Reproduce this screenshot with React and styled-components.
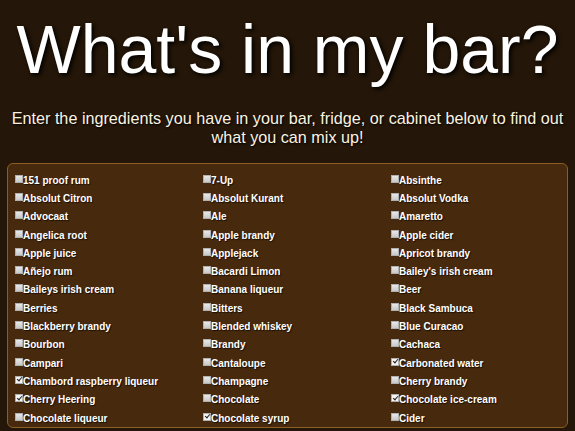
import React from 'react';
import styled, { createGlobalStyle } from 'styled-components';

const GlobalStyle = createGlobalStyle`
  html, body {
    margin: 0;
    padding: 0;
    background: #241608;
    font-family: "Liberation Sans", Arial, sans-serif;
  }
`;

const Page = styled.div`
  padding: 0 7px 0 7px;
  overflow: hidden;
  height: 431px;
  box-sizing: border-box;
`;

const Title = styled.h1`
  margin: 10px 0 0;
  text-align: center;
  color: #ffffff;
  font-size: 68px;
  font-weight: normal;
  line-height: 78px;
  text-shadow: 2px 2px 4px #000;
`;

const Intro = styled.p`
  margin: 21px -7px 0;
  text-align: center;
  color: #fbf3e0;
  font-size: 16.2px;
  line-height: 19px;
  white-space: nowrap;
  text-shadow: 1px 1px 2px #000;
`;

const Panel = styled.div`
  margin-top: 16px;
  background: #472a0e;
  border: 1px solid #8d5e24;
  border-radius: 6px;
  padding: 7px 0 0 7px;
  display: grid;
  grid-template-columns: repeat(3, 188px);
`;

const Item = styled.label`
  display: flex;
  align-items: center;
  height: 18.3px;
  color: #ffffff;
  font-size: 10px;
  font-weight: bold;
  text-shadow: 1px 1px 1px #1a0d02;
  white-space: nowrap;
`;

const Box = styled.input`
  appearance: none;
  width: 8px;
  height: 8px;
  margin: -3px 0 0 0;
  background: linear-gradient(#e8e8e8, #c9c9c9);
  border: 1px solid #b0b0b0;
  box-sizing: border-box;
  position: relative;
  flex-shrink: 0;
  &:checked {
    background: #f4f4f4;
  }
  &:checked::after {
    content: '';
    position: absolute;
    left: 1.5px;
    top: -0.5px;
    width: 2px;
    height: 4px;
    border: solid #222;
    border-width: 0 1.5px 1.5px 0;
    transform: rotate(40deg);
  }
`;

const columns = [
  ['151 proof rum', 'Absolut Citron', 'Advocaat', 'Angelica root', 'Apple juice', 'Añejo rum', 'Baileys irish cream', 'Berries', 'Blackberry brandy', 'Bourbon', 'Campari', 'Chambord raspberry liqueur', 'Cherry Heering', 'Chocolate liqueur'],
  ['7-Up', 'Absolut Kurant', 'Ale', 'Apple brandy', 'Applejack', 'Bacardi Limon', 'Banana liqueur', 'Bitters', 'Blended whiskey', 'Brandy', 'Cantaloupe', 'Champagne', 'Chocolate', 'Chocolate syrup'],
  ['Absinthe', 'Absolut Vodka', 'Amaretto', 'Apple cider', 'Apricot brandy', "Bailey's irish cream", 'Beer', 'Black Sambuca', 'Blue Curacao', 'Cachaca', 'Carbonated water', 'Cherry brandy', 'Chocolate ice-cream', 'Cider'],
];

const checked = new Set(['Chambord raspberry liqueur', 'Cherry Heering', 'Chocolate syrup', 'Carbonated water', 'Chocolate ice-cream']);

const rows = [];
for (let r = 0; r < columns[0].length; r++) {
  for (let c = 0; c < 3; c++) rows.push(columns[c][r]);
}

const App = () => (
  <Page>
    <GlobalStyle />
    <Title>What's in my bar?</Title>
    <Intro>
      Enter the ingredients you have in your bar, fridge, or cabinet below to find out
      <br />what you can mix up!
    </Intro>
    <Panel>
      {rows.map((name) => (
        <Item key={name}>
          <Box type="checkbox" defaultChecked={checked.has(name)} />
          {name}
        </Item>
      ))}
    </Panel>
  </Page>
);

export default App;
